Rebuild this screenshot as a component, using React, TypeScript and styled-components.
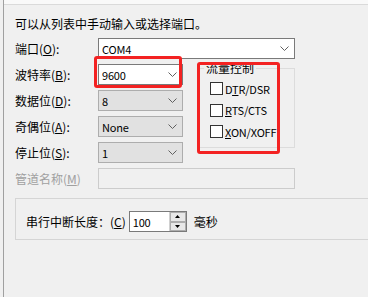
import styled, { createGlobalStyle } from "styled-components";

const GlobalStyle = createGlobalStyle`
  html, body {
    margin: 0;
    padding: 0;
    background: #f0f0f0;
  }
  body {
    font-family: "Noto Sans CJK SC", "Noto Sans", sans-serif;
    font-size: 12px;
    color: #000;
  }
`;

const Page = styled.div`
  position: relative;
  width: 368px;
  height: 297px;
  padding-left: 3px;
  box-sizing: border-box;
  overflow: hidden;
  background: #f0f0f0;
`;

const Sheet = styled.div`
  height: 100%;
  border-left: 1px solid #a0a0a0;
`;

const TabStrip = styled.div`
  height: 4px;
  background: #f9f9f9;
  border-bottom: 1px solid #dadada;
`;

const Body = styled.div`
  padding-left: 11px;
`;

const Intro = styled.div`
  margin-top: 11px;
  height: 16px;
  line-height: 16px;
  white-space: nowrap;
`;

const Grid = styled.div`
  margin-top: 6px;
  display: grid;
  grid-template-columns: 83px 85px 15px 97px;
  grid-template-rows: repeat(6, 21px);
  row-gap: 5px;
`;

const Label = styled.div<{ $disabled?: boolean }>`
  grid-column: 1;
  display: flex;
  align-items: center;
  white-space: nowrap;
  color: ${(p) => (p.$disabled ? "#a0a0a0" : "#000")};
`;

const Value = styled.span`
  font-size: 11px;
  letter-spacing: -0.2px;
`;

const Combo = styled.div<{ $editable?: boolean; $wide?: boolean }>`
  grid-column: ${(p) => (p.$wide ? "2 / 5" : "2")};
  display: flex;
  align-items: center;
  justify-content: space-between;
  padding: 0 5px 0 3px;
  box-sizing: border-box;
  border: 1px solid ${(p) => (p.$editable ? "#7a7a7a" : "#adadad")};
  background: ${(p) => (p.$editable ? "#fff" : "#e1e1e1")};
`;

const DisabledEdit = styled.div`
  grid-column: 2 / 5;
  box-sizing: border-box;
  border: 1px solid #cccccc;
  background: #f0f0f0;
`;

const FlowGroup = styled.div`
  position: relative;
  grid-column: 4;
  grid-row: 2 / span 4;
  align-self: start;
  margin-top: 4px;
  height: 80px;
  box-sizing: border-box;
  border: 1px solid #dcdcdc;
  padding: 9px 0 0 11px;
`;

const Legend = styled.span`
  position: absolute;
  left: 5px;
  top: -8px;
  padding: 0 2px;
  line-height: 14px;
  background: #f0f0f0;
`;

const CheckRow = styled.label`
  display: flex;
  align-items: center;
  gap: 2px;
  height: 21.5px;
  white-space: nowrap;
`;

const CheckBox = styled.span`
  width: 13px;
  height: 13px;
  box-sizing: border-box;
  border: 1px solid #333;
  background: #fff;
`;

const BreakGroup = styled.div`
  margin-top: 9px;
  width: 380px;
  height: 42px;
  box-sizing: border-box;
  border: 1px solid #d5d5d5;
  padding: 12px 0 0 10px;
  display: flex;
  align-items: flex-start;
  white-space: nowrap;
`;

const BreakRow = styled.div`
  display: flex;
  align-items: center;
  height: 21px;
`;

const Spin = styled.div`
  margin-left: 3px;
  width: 58px;
  height: 21px;
  box-sizing: border-box;
  border: 1px solid #7a7a7a;
  background: #fff;
  display: flex;
  align-items: center;
  justify-content: space-between;
  padding-left: 3px;
`;

const SpinButtons = styled.div`
  display: flex;
  flex-direction: column;
  width: 16px;
  height: 19px;
  border-left: 1px solid #d0d0d0;
`;

const SpinButton = styled.div`
  flex: 1;
  display: flex;
  align-items: center;
  justify-content: center;
  background: #e8e8e8;
  border: 1px solid #adadad;
  box-sizing: border-box;
`;

const Unit = styled.span`
  margin-left: 7px;
`;

const RedMark = styled.div<{ $x: number; $y: number; $w: number; $h: number }>`
  position: absolute;
  left: ${(p) => p.$x}px;
  top: ${(p) => p.$y}px;
  width: ${(p) => p.$w}px;
  height: ${(p) => p.$h}px;
  box-sizing: border-box;
  border: 3px solid #f32222;
  border-radius: 3px;
  pointer-events: none;
`;

function Chevron() {
  return (
    <svg width="9" height="5" viewBox="0 0 9 5">
      <path d="M0.5 0.5 L4.5 4.5 L8.5 0.5" fill="none" stroke="#606060" strokeWidth="1" />
    </svg>
  );
}

function Triangle({ up }: { up?: boolean }) {
  return (
    <svg width="5" height="3" viewBox="0 0 5 3">
      <path d={up ? "M0 3 L2.5 0 L5 3 Z" : "M0 0 L2.5 3 L5 0 Z"} fill="#000" />
    </svg>
  );
}

export default function App() {
  return (
    <>
      <GlobalStyle />
      <Page>
        <Sheet>
          <TabStrip />
          <Body>
            <Intro>可以从列表中手动输入或选择端口。</Intro>
            <Grid>
              <Label>
                端口(<u>O</u>):
              </Label>
              <Combo $editable $wide>
                <Value>COM4</Value>
                <Chevron />
              </Combo>

              <Label>
                波特率(<u>B</u>):
              </Label>
              <Combo $editable>
                <Value>9600</Value>
                <Chevron />
              </Combo>
              <FlowGroup>
                <Legend>流量控制</Legend>
                <CheckRow>
                  <CheckBox />
                  <Value>
                    D<u>T</u>R/DSR
                  </Value>
                </CheckRow>
                <CheckRow>
                  <CheckBox />
                  <Value>
                    <u>R</u>TS/CTS
                  </Value>
                </CheckRow>
                <CheckRow>
                  <CheckBox />
                  <Value>
                    <u>X</u>ON/XOFF
                  </Value>
                </CheckRow>
              </FlowGroup>

              <Label>
                数据位(<u>D</u>):
              </Label>
              <Combo>
                <Value>8</Value>
                <Chevron />
              </Combo>

              <Label>
                奇偶位(<u>A</u>):
              </Label>
              <Combo>
                <Value>None</Value>
                <Chevron />
              </Combo>

              <Label>
                停止位(<u>S</u>):
              </Label>
              <Combo>
                <Value>1</Value>
                <Chevron />
              </Combo>

              <Label $disabled>
                管道名称(<u>M</u>)
              </Label>
              <DisabledEdit />
            </Grid>

            <BreakGroup>
              <BreakRow>
                串行中断长度：(<u>C</u>)
                <Spin>
                  <Value>100</Value>
                  <SpinButtons>
                    <SpinButton>
                      <Triangle up />
                    </SpinButton>
                    <SpinButton>
                      <Triangle />
                    </SpinButton>
                  </SpinButtons>
                </Spin>
                <Unit>毫秒</Unit>
              </BreakRow>
            </BreakGroup>
          </Body>
        </Sheet>
        <RedMark $x={94} $y={56} $w={88} $h={32} />
        <RedMark $x={197} $y={62} $w={83} $h={92} />
      </Page>
    </>
  );
}
